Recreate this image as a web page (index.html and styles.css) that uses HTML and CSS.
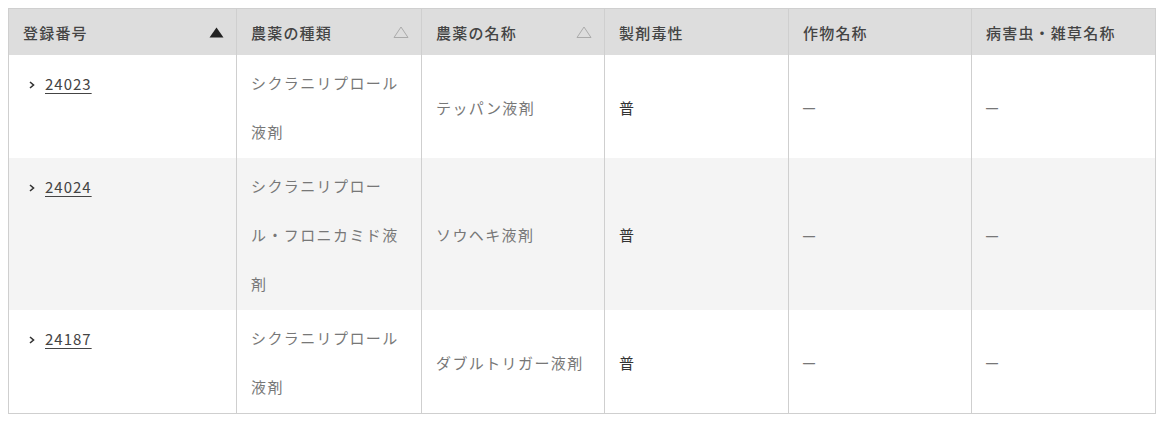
FILE: index.html
```html
<!DOCTYPE html>
<html lang="ja">
<head>
<meta charset="utf-8">
<link rel="stylesheet" href="styles.css">
</head>
<body>
<table class="reg-table">
  <colgroup>
    <col class="c1"><col class="c2"><col class="c3"><col class="c4"><col class="c5"><col class="c6">
  </colgroup>
  <thead>
    <tr>
      <th><div class="th-in"><span>登録番号</span><svg class="sort" width="15" height="11" viewBox="0 0 15 11"><polygon points="7.5,0.5 14.5,10.5 0.5,10.5" fill="#222"/></svg></div></th>
      <th><div class="th-in"><span>農薬の種類</span><svg class="sort" width="16" height="12" viewBox="0 0 16 12"><polygon points="8,1 15,11.5 1,11.5" fill="none" stroke="#aaa" stroke-width="1"/></svg></div></th>
      <th><div class="th-in"><span>農薬の名称</span><svg class="sort" width="16" height="12" viewBox="0 0 16 12"><polygon points="8,1 15,11.5 1,11.5" fill="none" stroke="#aaa" stroke-width="1"/></svg></div></th>
      <th><div class="th-in"><span>製剤毒性</span></div></th>
      <th><div class="th-in"><span>作物名称</span></div></th>
      <th><div class="th-in"><span>病害虫・雑草名称</span></div></th>
    </tr>
  </thead>
  <tbody>
    <tr>
      <td class="num"><span class="chev"><svg width="6" height="8" viewBox="0 0 6 8"><polyline points="1,1 4.5,4 1,7" fill="none" stroke="#333" stroke-width="1.6"/></svg></span><a href="#">24023</a></td>
      <td>シクラニリプロール液剤</td>
      <td>テッパン液剤</td>
      <td class="tox">普</td>
      <td><span class="dash">—</span></td>
      <td><span class="dash">—</span></td>
    </tr>
    <tr class="alt">
      <td class="num"><span class="chev"><svg width="6" height="8" viewBox="0 0 6 8"><polyline points="1,1 4.5,4 1,7" fill="none" stroke="#333" stroke-width="1.6"/></svg></span><a href="#">24024</a></td>
      <td>シクラニリプロール・フロニカミド液剤</td>
      <td>ソウヘキ液剤</td>
      <td class="tox">普</td>
      <td><span class="dash">—</span></td>
      <td><span class="dash">—</span></td>
    </tr>
    <tr>
      <td class="num"><span class="chev"><svg width="6" height="8" viewBox="0 0 6 8"><polyline points="1,1 4.5,4 1,7" fill="none" stroke="#333" stroke-width="1.6"/></svg></span><a href="#">24187</a></td>
      <td>シクラニリプロール液剤</td>
      <td>ダブルトリガー液剤</td>
      <td class="tox">普</td>
      <td><span class="dash">—</span></td>
      <td><span class="dash">—</span></td>
    </tr>
  </tbody>
</table>
</body>
</html>
```
FILE: styles.css
```css
html, body {
  margin: 0;
  padding: 0;
  background: #fff;
}
body {
  padding: 8px;
  font-family: "Noto Sans CJK JP", "Noto Sans", sans-serif;
}
.reg-table {
  width: 1147px;
  border-collapse: collapse;
  table-layout: fixed;
  border: 1px solid #cfcfcf;
}
.c1 { width: 228px; }
.c2 { width: 185px; }
.c3 { width: 183px; }
.c4 { width: 184px; }
.c5 { width: 183px; }
.c6 { width: 184px; }

.reg-table th {
  background: #dddddd;
  border-left: 1px solid #cfcfcf;
  border-right: 1px solid #cfcfcf;
  padding: 0 12px 0 14px;
  height: 46px;
  font-size: 15px;
  font-weight: 500;
  color: #444;
  letter-spacing: 1.2px;
  text-align: left;
}
.th-in {
  display: flex;
  align-items: center;
  justify-content: space-between;
}
.sort { flex: none; }

.reg-table td {
  border-left: 1px solid #cfcfcf;
  border-right: 1px solid #cfcfcf;
  padding: 3px 14px 2px;
  line-height: 49px;
  font-size: 15px;
  letter-spacing: 1.4px;
  color: #777;
  vertical-align: middle;
}
.reg-table tr.alt td { background: #f4f4f4; }
.reg-table td.num {
  vertical-align: top;
  padding-left: 20px;
  color: #333;
}
.chev {
  display: inline-block;
  width: 16px;
  vertical-align: 1px;
}
.chev svg { display: inline-block; }
.num a {
  color: #444;
  text-decoration: underline;
  text-underline-offset: 3px;
  letter-spacing: 1px;
}
.reg-table td.tox { color: #333; }
.dash {
  font-family: "Liberation Sans", sans-serif;
  font-size: 12px;
  font-weight: 700;
  letter-spacing: 0;
  color: #777;
}
```
